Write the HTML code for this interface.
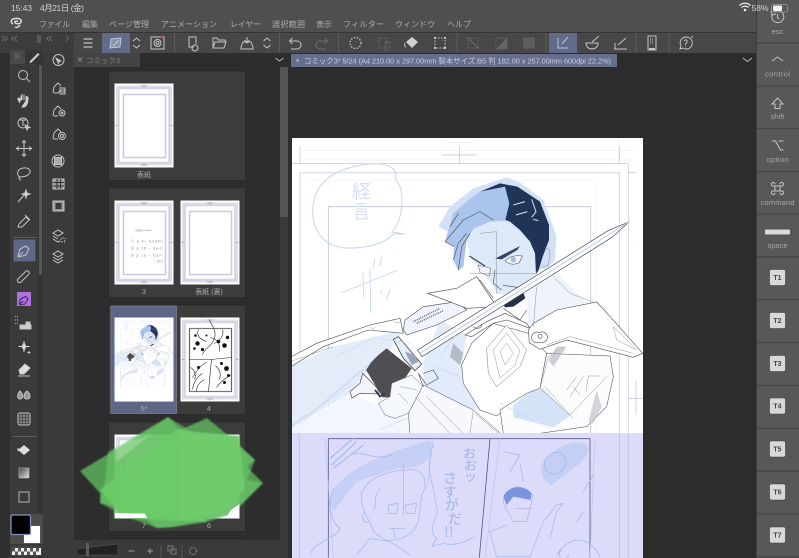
<!DOCTYPE html>
<html lang="ja"><head><meta charset="utf-8"><title>Clip Studio</title>
<style>html,body{margin:0;padding:0;background:#2c2c2c;width:799px;height:558px;overflow:hidden}svg{display:block}
text{font-family:"Liberation Sans","Noto Sans CJK JP",sans-serif}
.m{font-size:8px;fill:#adadad}.k{font-size:7.5px;fill:#a8a8a8;text-anchor:middle}
.t{font-size:7px;font-weight:bold;fill:#444;text-anchor:middle}.l{font-size:7px;fill:#aaa;text-anchor:middle}
.i{fill:none;stroke:#c4c4c4;stroke-width:1}.d{fill:none;stroke:#6c6c6c;stroke-width:1}
.sk{fill:none;stroke:#a3b7ec;stroke-width:2.200;stroke-linecap:round;stroke-linejoin:round}
.ln{fill:none;stroke:#4a4a50;stroke-width:1.800;stroke-linejoin:round}
.lf{fill:none;stroke:#7a7a82;stroke-width:1.200;stroke-linejoin:round}
.fr{fill:none;stroke:#cfd0e2;stroke-width:2.600}
.hw{fill:#9db3e8;font-family:"WenQuanYi Zen Hei","Noto Sans CJK JP",sans-serif}
</style></head><body>
<svg xmlns="http://www.w3.org/2000/svg" xmlns:xlink="http://www.w3.org/1999/xlink" width="799" height="558" viewBox="0 0 799 558">
<defs>
<filter id="b1" x="-10%" y="-10%" width="120%" height="120%"><feGaussianBlur stdDeviation=".9"/></filter>
<g id="frame">
<rect x="0" y="0" width="59" height="84" fill="#fff"/>
<rect x="2" y="2.500" width="55" height="79" fill="none" stroke="#bcbccf" stroke-width=".5"/>
<rect x="4" y="4.500" width="51" height="75" fill="none" stroke="#d4d4e4" stroke-width="2.600"/>
<rect x="9" y="11" width="42" height="63" fill="none" stroke="#cacadc" stroke-width="1.500"/>
<path d="M26 2.500h7M29.500 1v3M26 81.500h7M29.500 80v3M1 42h3M55 42h3" stroke="#a0a0b2" stroke-width=".8" fill="none"/>
</g>
<clipPath id="pg"><rect x="292" y="138" width="351" height="420"/></clipPath>
<clipPath id="upper"><rect x="292" y="138" width="351" height="295"/></clipPath>

<g id="art">
<rect x="292" y="138" width="351" height="295" fill="#fff"/>
<g transform="translate(290 130) scale(.33333)">
<path d="M455 75h105M508 48v54M30 50v50M5 101h1010M988 50v50" stroke="#bcbdd2" stroke-width="2" fill="none"/>
<path d="M30 62h1000M30 90h1000M460 38h100M985 25v70" stroke="#eceef8" stroke-width="2" fill="none"/>
<path class="fr" d="M30 128h960M30 128v790M988 128v790M1015 101v820"/>
<path d="M1012 805h48M1038 750v105M1015 128h25" stroke="#bcbdd2" stroke-width="2" fill="none"/>
<path d="M115 910V230h787v680" fill="none" stroke="#c0c0d2" stroke-width="2.400"/>
<path d="M62 152h855v760" fill="none" stroke="#f0f1f8" stroke-width="2"/>
<path d="M318 132C310 100 260 95 200 108C130 122 70 160 68 240C66 310 110 352 170 354C230 356 285 340 310 312L345 312L306 306C330 280 345 220 330 170C325 155 312 150 318 132Z" fill="none" stroke="#c3d5f2" stroke-width="3"/>
<path d="M0 712L130 650L340 600L300 660L235 725L180 790L110 830L30 880L0 900Z" fill="#e4ecfa"/>
<path d="M0 900L180 790L300 840L430 900L300 910H0Z" fill="#f2f6fd"/>
</g>

<g transform="translate(290 130) scale(.33333) translate(420 120)">
<path d="M60 110L130 55L230 22L270 38L340 90L380 200L375 270L350 295L325 300L330 220L100 210L25 170Z" fill="#d3e1f6"/>
<path d="M110 210L130 180L180 155L225 155L270 185L300 215L315 255L322 310L285 345L240 372L200 372L185 340L150 300L120 260Z" fill="#dde8f9"/>
<path d="M45 215L70 130L110 95L150 65L225 42L238 100L226 152L180 155L130 175L110 210L100 290L85 302L70 270L72 230Z" fill="#aac4eb"/>
<path d="M150 65L210 40L262 50L330 95L357 165L357 210L338 260L326 300L318 312L315 250L300 215L270 180L240 155L226 150L238 100L225 50Z" fill="#203457"/>
<path d="M45 215L100 150L150 125L190 150M70 270L85 220L110 190M85 300L95 230L120 190M60 170L85 130M45 215L72 230" class="ln" stroke="#35425f"/>
<path d="M305 88L318 125L305 142M250 105L285 95M258 135L292 125M310 148L325 152" stroke="#d5e2f5" stroke-width="3" fill="none"/>
<path d="M195 266L270 228L262 240L215 268Z" fill="#38435f"/>
<path d="M118 258L165 288" stroke="#38435f" stroke-width="3.500"/>
<path d="M225 272C240 258 262 255 277 258L268 278C255 285 238 285 225 272Z" fill="#eef3fc" stroke="#4a4a55" stroke-width="1.600"/>
<circle cx="250" cy="269" r="8" fill="#a9bad6"/>
<path d="M145 285L182 295L178 318L150 308Z" fill="#eef3fc" stroke="#5a5a65" stroke-width="1.500"/>
<path d="M195 300L190 340L215 360M218 346L262 352L240 372M225 395L270 365" class="ln"/>
<path d="M340 230L360 240L356 285L335 292M150 190L200 185L200 370M120 310L320 310" class="lf" stroke="#a9bcdc"/>
<path d="M115 355L150 330L190 385" fill="#fff" class="ln"/>
</g>

<g transform="translate(290 130) scale(.33333) translate(150 480)">
<path d="M250 215L300 90L380 135L365 225L370 280L420 360L340 350L250 290Z" fill="#e2ebfa"/>
<path d="M560 0L640 -60L720 20L800 70L905 190L815 100L770 38L600 100L565 110Z" fill="#eef3fc"/>
<path d="M380 60L470 20L560 0L565 110L460 100L380 135Z" fill="#fff"/>
<path d="M460 100L565 130L620 190L600 295L560 310L520 345L480 370L470 378L420 360L370 280L365 225L395 160Z" fill="#fff" stroke="#4a4a50" stroke-width="1.600"/>
<path d="M620 190L810 198L820 260L800 350L740 410L600 430L490 430L480 360L560 310L600 295Z" fill="#fbfcfe" stroke="#4a4a50" stroke-width="1.600"/>
<path d="M560 310L610 295L690 378L640 412L520 382L520 345Z" fill="#d5e3f8"/>
<path d="M600 295L625 200L670 170M615 290L690 375L800 260M600 295L700 385M780 258L745 258L738 305" class="lf"/>
<path d="M680 300L710 260M690 320L730 260M700 290L720 315" stroke="#777" stroke-width="1.200" fill="none"/>
<path d="M770 300L785 350L760 400L745 395Z" fill="#c2c4cc" opacity=".7"/>
<path d="M625 210L650 170L680 170L640 230Z" fill="#a8acb6" opacity=".55"/>
<path d="M340 160L370 190L360 225L330 200Z" fill="#8e929c" opacity=".55"/>
<path d="M440 175L500 105L560 180L540 230L470 290L445 250Z" fill="#fff" stroke="#70707a" stroke-width="1.400"/>
<path d="M460 180L500 130L540 180L525 225L480 265ZM480 185L500 160L520 190L495 225Z" class="lf"/>
<path d="M375 135L440 95L495 70L560 100L570 115L500 90L460 100L395 140Z" fill="#fff" class="ln"/>
<path d="M400 110a12 8 0 1 0 24-8M490 55L540 90L560 60" class="ln"/>
<path d="M-150 202L-70 160L90 105L180 85L190 130L85 120L-50 170L-150 232Z" fill="#fff" stroke="#4a4a50" stroke-width="1.800"/>
<path d="M-150 215L-20 170M90 110a8 5 0 1 0 16 0M160 90a12 8 0 1 0 24 0" class="lf"/>
<path d="M190 120L195 90L250 50L350 35L380 60L290 105L200 135Z" fill="#eef3fc" stroke="#4a4a50" stroke-width="1.800"/>
<path d="M220 95L300 55M230 100L310 62" stroke="#6a6a70" stroke-width="4.500" stroke-dasharray="3 3" fill="none"/>
<path d="M263 10L350 -5L410 -40L470 50L380 55Z" fill="#fff" stroke="#4a4a50" stroke-width="1.800"/>
<path d="M565 120L580 100L650 60L770 36L815 85L908 190L880 202L680 150L600 178L568 158Z" fill="#fff" stroke="#4a4a50" stroke-width="1.800"/>
<path d="M620 165L690 140L880 190M820 110L890 180L830 150Z" class="lf" stroke="#a9bcdc"/>
<path d="M598 128a16 16 0 1 0 1 28a16 16 0 1 0-1-28M600 133a6 6 0 1 0 1 12a6 6 0 1 0-1-12" class="ln" stroke-width="1.400"/>
<path d="M640 -40L690 10L760 36M590 -10L580 110" class="lf"/>
<!-- chin shadow, beneath blade -->
<path d="M490 42L550 8L556 25L520 50L495 52Z" fill="#253049"/>
<!-- sword -->
<path d="M868 -205L804 -178L233 180L246 200L816 -158Z" fill="#fff" stroke="#45454b" stroke-width="2"/>
<path d="M868 -205L240 190" stroke="#bccde9" stroke-width="3"/>
<path d="M160 148L175 140L245 222L225 242L190 205Z" fill="#e6ecf8" stroke="#45454b" stroke-width="2.400"/>
<path d="M195 185L225 195L235 215L215 225Z" fill="#9aa4b8"/>
<path d="M140 175L215 235L195 265L172 322L128 322L110 292L78 240L95 215L115 195Z" fill="#4e4e53"/>
<path d="M30 305L60 280L68 250L110 292L118 312L60 310L36 324Z" fill="#f2f5fb" stroke="#45454b" stroke-width="2"/>
<path d="M105 300L120 320L135 310" stroke="#26365a" stroke-width="5" fill="none"/>
<path d="M155 280L215 255L250 290L205 370L165 385L135 375L115 340L150 320Z" fill="#f5f8fd" stroke="#606066" stroke-width="1.500"/>
<path d="M250 285L400 360L482 430H210L205 370Z" fill="#f6f8fd" stroke="#45454b" stroke-width="1.500"/>
<path d="M225 320L330 430M260 320L370 430M400 360L390 430M405 370L475 430M180 290L230 300M175 310L205 340" class="lf"/>
<path d="M250 290L235 250L260 285L295 265L280 240L250 250" fill="#f6f8fd" class="ln" stroke-width="1.400"/>
<path d="M-100 380L100 210M-120 400L70 240M-10 200L110 140M-60 350L40 280M120 145L210 160M280 230L360 260M120 420L210 380M480 340L580 390M300 200L350 130" stroke="#c2d3f0" stroke-width="1.600" fill="none"/>
<path d="M-150 410L-100 375" stroke="#8d9098" stroke-width="1"/>
<path d="M5 8L170 -58M68 -55L72 25M90 -65L92 70M105 -95L100 -65M125 -100L120 -70M120 10L125 0M140 30L150 -2" stroke="#c3d4f0" stroke-width="2.500" fill="none"/>
</g>
<text font-size="19" x="352 352" y="198 218" fill="#cad9f2" font-family="'WenQuanYi Zen Hei',sans-serif" opacity=".8">経言</text>
</g>

<g id="lower">
<g transform="translate(290 425) scale(.33333)">
<path d="M28 25v374M988 25v374M1015 25v374" stroke="#c3c3e2" stroke-width="3" fill="none"/>
<path d="M115 398V41H900V398M600 41L568 398" fill="none" stroke="#5a5a88" stroke-width="2.500"/>
<path d="M105 40L130 398M430 40L410 190M915 40L900 398M630 40L585 398" stroke="#b7c4f2" stroke-width="2" fill="none"/>
<path d="M120 100L190 40M125 120L200 50M130 130L220 60" stroke="#9db3ee" stroke-width="3"/>
<path d="M115 220C160 130 270 90 420 45L430 60C420 110 400 130 320 130L200 170L130 260Z" fill="#c6cff6"/>
<path d="M760 110C800 60 860 40 890 60C905 80 880 110 850 130L785 180C760 170 745 140 760 110Z" fill="#c3cff5"/>
<path class="sk" d="M190 90C210 70 240 110 305 90M220 195C240 150 320 130 380 135C410 150 410 185 395 210L385 290C370 330 330 350 285 345L250 320C240 280 210 260 215 200ZM270 190C250 210 260 250 250 255M295 240L325 235L320 265L295 265ZM345 240L380 235L375 265L350 265ZM340 120V270M300 310H345M310 310L315 340M200 390L240 340L300 350L360 390M60 390C70 350 140 340 150 310C110 280 120 220 130 190M225 260a12 15 0 1 0 10 30"/>
<path class="sk" d="M430 60C410 110 420 160 430 190L440 250C450 270 420 290 430 330L440 340L425 365L460 355C490 365 530 350 555 335"/>
<path class="sk" d="M640 80L690 90L660 140M690 115L700 170M910 150L880 200M880 260L860 290M780 90a30 30 0 1 0 40 40a22 22 0 1 0-40-40M700 190C670 175 640 205 640 235L670 290L710 290L730 210ZM680 250H725M650 300L600 320L620 395H720L760 290L800 240L820 235L800 260L780 340M800 390C830 340 890 320 930 395M815 375a14 14 0 1 0 20 15"/>
<path d="M640 215C650 185 700 175 725 205L722 225L670 215L650 240Z" fill="#7d93e2"/>
</g>
<text font-size="13" class="hw" x="463 464 464" y="458 470 481">おおッ</text>
<text font-size="14" class="hw" x="443 443 445 448 444 449" y="483 497 510 524 537 537">さすがだ!!</text>
</g>
</defs>

<!-- base -->
<rect width="799" height="558" fill="#2c2c2c"/>
<rect width="799" height="32" fill="#4f4f4f"/>
<rect y="32" width="756" height="1" fill="#333"/>
<rect x="74" y="33" width="682" height="20" fill="#474747"/>
<rect x="0" y="33" width="74" height="20" fill="#3c3c3c"/>
<rect x="0" y="53" width="10" height="505" fill="#2f2f2f"/>
<rect x="10" y="53" width="28" height="505" fill="#3a3a3a"/>
<rect x="38" y="53" width="5" height="505" fill="#333"/>
<rect x="39" y="65" width="3" height="210" fill="#565656"/>
<rect x="43" y="53" width="31" height="505" fill="#3a3a3a"/>
<rect x="74" y="53" width="217" height="505" fill="#2d2d2d"/>
<rect x="73" y="53" width="67" height="14" fill="#444"/>
<rect x="280" y="67" width="8" height="150" fill="#555"/>
<rect x="280" y="217" width="8" height="341" fill="#3a3a3a"/>

<path d="M13 24c-3-2-2-5 2-5.500 4-.5 7 1 6 3.500s-5 2-6 .500 2-2 3-1M15 27c2 1 4-.5 5-2" fill="none" stroke="#ddd" stroke-width="1.500"/>
<g class="m">
<text x="39" y="27" textLength="31">ファイル</text><text x="82" y="27" textLength="16">編集</text>
<text x="109" y="27" textLength="40">ページ管理</text><text x="161" y="27" textLength="56">アニメーション</text>
<text x="230" y="27" textLength="31">レイヤー</text><text x="272" y="27" textLength="33">選択範囲</text>
<text x="316" y="27" textLength="16">表示</text><text x="343" y="27" textLength="41">フィルター</text>
<text x="395" y="27" textLength="40">ウィンドウ</text><text x="447" y="27" textLength="24">ヘルプ</text>
</g>

<!-- left header -->
<path d="M2 36l2.500 2.500L2 41M5 36l2.500 2.500L5 41M14 36l-2.500 2.500L14 41M17 36l-2.500 2.500L17 41M49 36l-2.500 2.500L49 41M52 36l-2.500 2.500L52 41M66 36l2.500 2.500L66 41" fill="none" stroke="#777" stroke-width=".8"/>
<rect x="37" y="35" width="4" height="8" fill="#5a5a5a"/>
<rect x="10" y="50" width="15" height="10" fill="#474747"/><rect x="25" y="50" width="17" height="14" fill="#353535"/>
<rect x="10" y="60" width="15" height="4" fill="#4a4a4a"/>
<path d="M14 54h6M14 56h6M14 58h6" stroke="#777" stroke-width=".7"/>
<path d="M30 61l8-8 1.500 1.500-8 8-2 .5z" fill="#d0d0d0"/>

<!-- toolbar -->
<path d="M83.500 39h9M83.500 43h9M83.500 47h9" stroke="#c4c4c4" stroke-width="1.200"/>
<rect x="102" y="33" width="28" height="20" fill="#626a8a"/>
<path d="M111 39l10-1-1 9-10 1zM113 46l6-6" fill="#8a91ab" stroke="#c2c8dc"/>
<path d="M133 41l3.500-3 3.500 3M133 45l3.500 3 3.500-3M263.500 41l3.500-3 3.500 3M263.500 45l3.500 3 3.500-3" class="i"/>
<rect x="151" y="37" width="13" height="12" class="i"/><circle cx="157.500" cy="43" r="3.500" class="i"/><circle cx="157.500" cy="43" r="1.500" class="i"/><circle cx="162" cy="37" r="1.500" fill="#b84c5c"/>
<path d="M174.500 33v20M279.500 33v20M338.500 33v20M457 33v20M546 33v20M636 33v20M669 33v20" stroke="#5c5c5c"/>
<path d="M194 47h-5v-10h7v7" class="i"/><circle cx="195" cy="48" r="3" class="i"/>
<path d="M213 48v-10h4l1 2h7v2M213 48l2-6h11l-2 6z" class="i"/>
<path d="M241 47l2-5h8l2 5v2h-12zM247 37v6M244.500 40l2.500 3 2.500-3" class="i"/>
<path d="M290 41h7a4 4 0 0 1 0 8h-6M292.500 38l-3 3 3 3" class="i"/>
<path d="M327 41h-7a4 4 0 0 0 0 8h6M324.500 38l3 3-3 3" class="d"/>
<circle cx="355.500" cy="43" r="5.500" fill="none" stroke="#c4c4c4" stroke-width="1.300" stroke-dasharray="1.500 1.500"/>
<path d="M379 38h8v10h-8zM385 42h5v8h-5z" class="d" stroke-dasharray="1.500 1"/>
<path d="M406 42l6-5 6 5-6 6z" fill="#d0d0d0"/><path d="M405 43c-1 2 0 4 1 4" class="i"/>
<rect x="435" y="38" width="10" height="10" fill="none" stroke="#c4c4c4" stroke-dasharray="1.500 1.500"/><path d="M434 37h2v2h-2zM444 37h2v2h-2zM434 47h2v2h-2zM444 47h2v2h-2z" fill="#c4c4c4"/>
<rect x="468" y="38" width="10" height="10" class="d" stroke-dasharray="1.500 1.500"/><path d="M467 37l12 12" class="d"/>
<path d="M496 49l11-11v11z" fill="#666"/><path d="M496 38h11v11h-11z" fill="none" stroke="#666" stroke-dasharray="1.500 1"/>
<rect x="524" y="38" width="10" height="10" fill="#5c5c5c" stroke="#666"/>
<rect x="549" y="33" width="28" height="20" fill="#626a8a"/>
<path d="M558 38v10h10M562 44l6-7" class="i" stroke="#cfd3e2"/>
<path d="M586 43h12c0 4-3 6-6 6s-6-2-6-6zM592 42l7-6" class="i" stroke="#b8b8b8"/>
<path d="M614 49h13M615 49v-6M618 45l8-7" class="i" stroke="#b8b8b8"/>
<rect x="648" y="36" width="8" height="14" class="i"/><path d="M650 39h4M650 41h4M650 43h4" stroke="#c4c4c4" stroke-dasharray="1 1"/>
<path d="M649 49h6" stroke="#c4c4c4" stroke-width="2"/>
<path d="M686 37a6 6 0 1 1-3 11l-3 1 1-3a6 6 0 0 1 5-9zM684 41c1-2 4-1 3 1s-1.500 1-1.500 3M685.500 46.500v.5M691 37h2" class="i"/>

<!-- tabs -->
<path d="M78 57.500l4 4M82 57.500l-4 4" stroke="#888"/>
<text x="86" y="63" font-size="7.500" fill="#808080" textLength="34">コミック3</text>
<path d="M275.500 58l4 3 4-3M743 58l4.500 3.500 4.500-3.500" fill="none" stroke="#bbb"/>
<rect x="291" y="54" width="326" height="13" fill="#666e8e"/>
<circle cx="297.500" cy="60.500" r="1.200" fill="#c0c4d6"/>
<text x="304" y="63.300" font-size="7.500" fill="#c9cce0" textLength="307">コミック3* 5/24 (A4 210.00 x 297.00mm 製本サイズ:B5 判 182.00 x 257.00mm 600dpi 22.2%)</text>

<!-- column 2 icons -->
<g class="i">
<circle cx="58.500" cy="60" r="5.500"/><path d="M56 58l5 3-2 .5-.5 2z" fill="#c4c4c4"/>
<path d="M53 93l1-6 4-4 3 3M54 93h4l3-3M59 88h6v6h-6M59 90h6M59 92h6"/>
<path d="M53 116l1-6 4-4 3 3M54 116h4"/><circle cx="62" cy="113" r="3"/><circle cx="62" cy="113" r="1"/>
<path d="M53 139l1-6 4-4 3 3M54 139h4"/><circle cx="62" cy="136" r="3.500"/><circle cx="62" cy="136" r="1.500"/>
<circle cx="58" cy="161" r="6"/><rect x="54.500" y="157.500" width="7" height="7" fill="#aaa"/>
<rect x="53" y="179" width="11" height="10" fill="#999"/><path d="M53 182.500h11M53 186h11M57 179v10M60.500 179v10" stroke="#333"/>
<rect x="53" y="201" width="11" height="10" fill="#999"/><path d="M55.500 203h6v6h-6z" fill="#3a3a3a" stroke="none"/>
<path d="M53 233l5-3 5 3-5 3zM53 236l5 3M53 239l5 3 2-1"/><path d="M61 238h4v4h-4z" stroke-dasharray="1 1"/>
<path d="M53 254l5-3 5 3-5 3zM53 257l5 3 5-3M53 260l5 3 5-3"/>
</g>

<!-- tool icons -->
<g class="i">
<circle cx="23" cy="75" r="4.500"/><path d="M26.500 78.500l3.500 3.500"/>
<path d="M20 103c-2-3-3-5-1-5l2 2v-4.500M22 100v-6M24 100v-5.500M26 101v-4c1-1 2 0 2 1 0 4-1 8-4 9h-2z" fill="#cfcfcf" stroke="#cfcfcf"/>
<circle cx="23" cy="123" r="5"/><path d="M20 120h6M23 120v6M25 125l5 2.500-2 .5-1 2z" fill="#c4c4c4"/>
<path d="M24 141v15M16.500 148.500h15M22 143l2-2.500 2 2.500M22 154l2 2.500 2-2.500M19 146.500l-2.500 2 2.500 2M29 146.500l2.500 2-2.500 2"/>
<path d="M20 177c-4-2-3-8 3-9s9 3 6 6c-2 2-5 3-9 3c-1 0-2 2 1 3"/>
<path d="M18 202l7-8"/><path d="M26 190l1 3 3 1-3 1-1 3-1-3-3-1 3-1z" fill="#ddd"/>
<path d="M18 227l1-3 7-7 3 3-7 7zM25 215l5 5" />
</g>
<rect x="13" y="239" width="23" height="23" fill="#5f6786" stroke="#333"/>
<rect x="13" y="237" width="24" height="1" fill="#666"/>
<path d="M18 256l2-7 6-3 3 3-3 6-7 2zM19 256l4-4" class="i"/>
<path d="M18 279l8-8c2-1 4 1 3 3l-8 8c-2 2-5-1-3-3z" class="i"/>
<rect x="17" y="292" width="14" height="14" fill="#b26fe2"/>
<path d="M19 304l1.500-5 5-2.500 2.500 2.500-3 5-6 1M20 304l3-3" fill="none" stroke="#3a2a4a"/>
<g class="i">
<path d="M20 329v-4h6v-3h4v3h1v4z" fill="#cfcfcf"/><path d="M18 317l-3-1M18 320l-3 0M18 323l-3 1" stroke-dasharray="1 1"/>
<path d="M24 341v11M18.500 346.500h11" stroke="#ddd" stroke-width="1"/><path d="M22 346.500l2-4 2 4-2 4z" fill="#ddd"/><path d="M29 351v3M27.500 352.500h3"/>
<path d="M19 370l6-6 5 4-6 6h-4z" fill="#e0e0e0"/><path d="M18 376h12"/>
<path d="M20 391c-3 3-3 8 0 8s4-4 0-8zM27 391c-4 3-4 8 0 8s4-5 0-8z" fill="#999"/>
<rect x="18" y="413" width="12" height="12" rx="2"/><path d="M18 419h12M24 413v12M21 413v12M27 413v12M18 416h12M18 422h12" stroke-width=".6"/>
</g>
<path d="M13 436.500h24M13 237.500h24" stroke="#5c5c5c"/>
<path d="M24 445l6 5-6 5-6-5z" fill="#ddd"/><path d="M18 448v3" stroke="#ddd"/>
<defs><linearGradient id="gr" x1="0" y1="0" x2="1" y2="1"><stop offset="0" stop-color="#444"/><stop offset="1" stop-color="#e4e4e4"/></linearGradient></defs>
<rect x="19" y="468" width="10" height="10" fill="url(#gr)" stroke="#bbb" stroke-width=".6"/>
<rect x="19" y="492" width="10" height="10" fill="none" stroke="#b4b4b4"/>
<rect x="10" y="514" width="33" height="30" fill="#4c4c4c"/>
<rect x="23.500" y="525.500" width="17" height="18" fill="#fff" stroke="#555"/>
<rect x="11" y="515" width="19.500" height="19.500" rx="1.500" fill="#000" stroke="#7e8cc0" stroke-width="1.300"/>
<rect x="10" y="546" width="32" height="10" rx="1" fill="#444"/>
<rect x="12" y="548" width="29" height="7" fill="#eee"/>
<path d="M12 548h3v3.500h-3zM18 548h3v3.500h-3zM24 548h3v3.500h-3zM30 548h3v3.500h-3zM36 548h3v3.500h-3zM15 551.500h3v3.500h-3zM21 551.500h3v3.500h-3zM27 551.500h3v3.500h-3zM33 551.500h3v3.500h-3z" fill="#555"/>

<!-- page cards -->
<g fill="#3c3c3c" stroke="#262626" stroke-width=".6">
<rect x="108.500" y="71" width="137" height="109.500"/>
<rect x="108.500" y="188" width="137" height="109.500"/>
<rect x="108.500" y="305" width="137" height="109.500"/>
<rect x="108.500" y="422" width="137" height="109.500"/>
<rect x="108.500" y="539" width="137" height="18"/>
</g>
<rect x="111" y="306" width="65.500" height="107.500" fill="#5e6685" stroke="#858aa0" stroke-width=".6"/>
<use xlink:href="#frame" href="#frame" x="114.500" y="83.500"/>
<use xlink:href="#frame" href="#frame" x="114.500" y="200.500"/>
<use xlink:href="#frame" href="#frame" x="180.500" y="200.500"/>
<use xlink:href="#frame" href="#frame" x="114.500" y="317.500"/>
<use xlink:href="#frame" href="#frame" x="180.500" y="317.500"/>
<!-- notes on page 3 -->
<g transform="translate(114.500 200.500)" font-size="3.500" fill="#777">
<text x="20" y="31" textLength="18">ペメトーリー</text>
<text x="16" y="42" textLength="32">① p.4~ 3x34n</text>
<text x="16" y="49" textLength="32">② p.10 ~ 3u-n</text>
<text x="16" y="56" textLength="32">③ p.12 ~ C3ハ</text>
<text x="42" y="62" textLength="6">カ3</text>
</g>
<!-- thumb 5 -->
<g transform="translate(114.500 317.500) scale(.1681) translate(-292 -138)"><use xlink:href="#art" href="#art" clip-path="url(#upper)"/><rect x="292" y="433" width="351" height="205" fill="#fff"/><use xlink:href="#lower" href="#lower" opacity=".55"/></g>
<!-- thumb 4 -->
<g transform="translate(180.500 317.500)" fill="none" stroke="#222" stroke-width=".6">
<path d="M9 11h42v63H9zM9 42h22M31 42l-3 32M30 42L51 40"/>
<path d="M29 3c5 8 8 14 3 22-3 5-8 6-10 12M30 20c8 2 10 8 9 14M12 60c5-8 10-14 14-15M36 70c4-6 10-10 14-12M12 72c1-8 6-14 10-16M18 12c-3 6 2 10 8 12M42 12c2 6-2 10-8 14M10 50c4 2 6 8 4 12M16 74c0-6 3-9 8-12M35 48c4 4 6 8 4 14"/>
<g fill="#111" stroke="none"><circle cx="17" cy="26" r="2.200"/><circle cx="22" cy="32" r="1.600"/><circle cx="14" cy="31" r="1.300"/><circle cx="44" cy="28" r="2.300"/><circle cx="47" cy="20" r="1.700"/><circle cx="38" cy="24" r="1.800"/><circle cx="46" cy="51" r="2.400"/><circle cx="41" cy="46" r="1.500"/><circle cx="48" cy="58" r="1.500"/><circle cx="15" cy="18" r="1.300"/><circle cx="18" cy="50" r="1.500"/><circle cx="44" cy="65" r="1.500"/><circle cx="26" cy="18" r="1"/></g>
</g>
<g class="l">
<text x="144" y="177">表紙</text><text x="144" y="294">3</text><text x="209" y="294">表紙 (裏)</text>
<text x="144" y="411">5*</text><text x="209" y="411">4</text><text x="144" y="528">7</text><text x="209" y="528">6</text>
</g>

<!-- pages 7 / 6 -->
<use xlink:href="#frame" href="#frame" x="114.500" y="434.500"/>
<use xlink:href="#frame" href="#frame" x="180.500" y="434.500"/>

<!-- green blob -->
<g filter="url(#b1)">
<path d="M80 471L115 450L143 433L168 417L180 430L207 418L230 437L255 460L247 467L263 483L233 513L207 522L173 527L157 528L147 520L127 517L115 507L100 503L100 493Z" fill="#5fb65e" opacity=".8"/>
<path d="M108 452L168 417L205 440L230 437L255 460L247 480L263 483L233 513L173 527L157 528L127 517L100 503L105 480Z" fill="#6acb67" opacity=".6"/>
<path d="M114 478L170 438L239 436V500L200 518H114Z" fill="#6ecb6a" opacity=".8"/>
<path d="M100 490L180 428L240 470L205 522L125 518Z" fill="#6acb67" opacity=".95"/>
<path d="M178 430L239 436L245 490L220 512L180 520Z" fill="#70cd6c" opacity=".85"/>
<path d="M116 445L150 435L116 462Z" fill="#fff" opacity=".22"/>
</g>
<path d="M115 513L145 513.500L147 518H115ZM231 510L239.500 504V518H226Z" fill="#fff"/>

<!-- bottom bar -->
<rect x="74" y="540" width="206" height="18" fill="#3a3a3a"/>
<path d="M77 549l41-5v11H77z" fill="#222" stroke="#555" stroke-width=".6"/>
<rect x="86" y="543" width="3" height="13" fill="#5c5c5c"/>
<path d="M128.500 551h6M147 551h6M150 548v6" stroke="#999"/>
<path d="M161 545v13M182 545v13" stroke="#555"/>
<path d="M168 546h5v5h-5zM171 549h5v5h-5z" fill="none" stroke="#999" stroke-dasharray="1 .6"/>
<circle cx="193" cy="551" r="3.500" fill="none" stroke="#999" stroke-dasharray="1 .8"/>

<!-- canvas -->
<g clip-path="url(#pg)"><use xlink:href="#art" href="#art" clip-path="url(#upper)"/><rect x="292" y="433" width="351" height="125" fill="#dcdcfa"/><use xlink:href="#lower" href="#lower"/></g>

<!-- right panel -->
<rect x="756" y="0" width="43" height="558" fill="#585858"/>
<rect x="756" y="0" width="1" height="558" fill="#3e3e3e"/>
<path d="M757 43h42M757 86h42M757 128.500h42M757 171.500h42M757 214h42M757 257h42M757 299.500h42M757 342.500h42M757 385.500h42M757 428.500h42M757 471h42M757 514h42M757 557h42" stroke="#434343" stroke-width="1.200"/>
<g class="i" stroke="#d6d6d6">
<path d="M774 12a6 6 0 1 1-2 3M771 11l1 4 4-1M777.500 14v4l2 1"/>
<path d="M772 61l5.500-4 5.500 4"/>
<path d="M777.500 98l5.500 6h-3v4.500h-5V104h-3z"/>
<path d="M772 141h3.500l5 9h3M778.500 141h5"/>
<path d="M775 186h5M775 191h5M775 186v5M780 186v5M775 186h-1.500a1.800 1.800 0 1 1 1.500-1.800M780 186h1.500a1.800 1.800 0 1 0-1.500-1.800M775 191h-1.500a1.800 1.800 0 1 0 1.500 1.800M780 191h1.500a1.800 1.800 0 1 1-1.500 1.800"/>
</g>
<rect x="765" y="229.500" width="25" height="5" rx="1" fill="#d9d9d9"/>
<g class="k">
<text x="777.500" y="34">esc</text><text x="777.500" y="76.500" textLength="25">control</text>
<text x="777.500" y="119">shift</text><text x="777.500" y="162" textLength="22">option</text>
<text x="777.500" y="205" textLength="34">command</text><text x="777.500" y="248">space</text>
</g>
<g fill="#d8d8d8" stroke="#3e3e3e" stroke-width=".6">
<rect x="769.500" y="269.500" width="16" height="16" rx="2"/><rect x="769.500" y="312.500" width="16" height="16" rx="2"/>
<rect x="769.500" y="355.500" width="16" height="16" rx="2"/><rect x="769.500" y="398" width="16" height="16" rx="2"/>
<rect x="769.500" y="441" width="16" height="16" rx="2"/><rect x="769.500" y="484" width="16" height="16" rx="2"/>
<rect x="769.500" y="527" width="16" height="16" rx="2"/>
</g>
<g class="t">
<text x="777.500" y="280">T1</text><text x="777.500" y="323">T2</text><text x="777.500" y="366">T3</text>
<text x="777.500" y="408.500">T4</text><text x="777.500" y="451.500">T5</text><text x="777.500" y="494.500">T6</text><text x="777.500" y="537.500">T7</text>
</g>

<!-- status bar on top -->
<g style="font-size:8.500px;fill:#d4d4d4">
<text x="11" y="11" textLength="21">15:43</text>
<text x="40" y="11" textLength="44">4月21日 (金)</text>
<text x="751.500" y="11">58%</text>
</g>
<path d="M739.500 5.500c3-3 8-3 11 0M741.500 7.500c2-1.800 5-1.800 7 0" fill="none" stroke="#eee" stroke-width="1.300"/>
<circle cx="745" cy="10" r="1.300" fill="#eee"/>
<rect x="771.500" y="4.500" width="16" height="7.500" rx="2" fill="none" stroke="#999" stroke-width=".8"/>
<rect x="773" y="5.500" width="9" height="5.500" rx="1" fill="#f0f0f0"/>
</svg>
</body></html>
